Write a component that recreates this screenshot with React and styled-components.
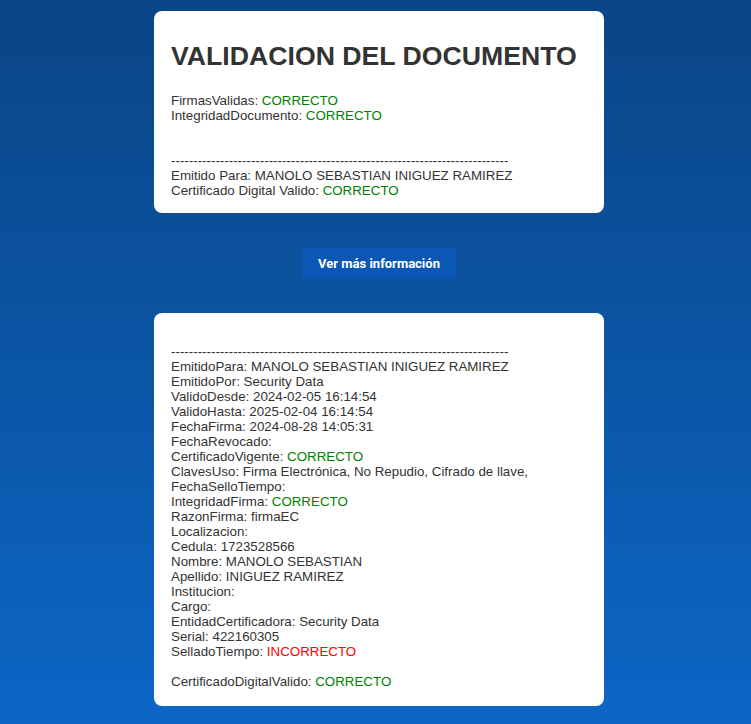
import React from "react";
import styled, { createGlobalStyle } from "styled-components";

const GlobalStyle = createGlobalStyle`
  html, body {
    margin: 0;
    padding: 0;
  }
  body {
    background: linear-gradient(180deg, #0a4585 0%, #0c66c6 100%);
    min-height: 724px;
    font-family: "Liberation Sans", Arial, sans-serif;
  }
`;

const Page = styled.div`
  display: flex;
  flex-direction: column;
  align-items: center;
  padding: 11px 0 0 7px;
`;

const Card = styled.div`
  box-sizing: border-box;
  width: 450px;
  background: #fff;
  border-radius: 8px;
  padding: 16px 17px ${(p) => p.$padBottom || 16}px;
  color: #333;
  font-size: 13.33px;
  line-height: 15px;
`;

const Title = styled.h1`
  margin: 14px 0 22px;
  font-size: 26.67px;
  line-height: 30px;
  font-weight: bold;
  color: #333;
`;

const Line = styled.div`
  min-height: 15px;
  white-space: nowrap;
`;

const Status = styled.span`
  color: ${(p) => (p.$ok ? "#008000" : "#ff0000")};
`;

const Button = styled.button`
  margin: 35px 0 34px;
  height: 31px;
  padding: 0 16px;
  border: none;
  border-radius: 2px;
  background: #0b57b6;
  color: #fff;
  font-family: Roboto, "Liberation Sans", sans-serif;
  font-weight: bold;
  font-size: 13px;
  cursor: pointer;
`;

const DASHES = "-".repeat(76);

const details = [
  ["EmitidoPara", "MANOLO SEBASTIAN INIGUEZ RAMIREZ"],
  ["EmitidoPor", "Security Data"],
  ["ValidoDesde", "2024-02-05 16:14:54"],
  ["ValidoHasta", "2025-02-04 16:14:54"],
  ["FechaFirma", "2024-08-28 14:05:31"],
  ["FechaRevocado", ""],
  ["CertificadoVigente", true],
  ["ClavesUso", "Firma Electrónica, No Repudio, Cifrado de llave,"],
  ["FechaSelloTiempo", ""],
  ["IntegridadFirma", true],
  ["RazonFirma", "firmaEC"],
  ["Localizacion", ""],
  ["Cedula", "1723528566"],
  ["Nombre", "MANOLO SEBASTIAN"],
  ["Apellido", "INIGUEZ RAMIREZ"],
  ["Institucion", ""],
  ["Cargo", ""],
  ["EntidadCertificadora", "Security Data"],
  ["Serial", "422160305"],
  ["SelladoTiempo", false],
];

function Field({ label, value }) {
  if (typeof value === "boolean") {
    return (
      <Line>
        {label}: <Status $ok={value}>{value ? "CORRECTO" : "INCORRECTO"}</Status>
      </Line>
    );
  }
  return (
    <Line>
      {label}:{value ? ` ${value}` : ""}
    </Line>
  );
}

export default function App() {
  return (
    <>
      <GlobalStyle />
      <Page>
        <Card $padBottom={15}>
          <Title>VALIDACION DEL DOCUMENTO</Title>
          <Field label="FirmasValidas" value={true} />
          <Field label="IntegridadDocumento" value={true} />
          <Line />
          <Line />
          <Line>{DASHES}</Line>
          <Field label="Emitido Para" value="MANOLO SEBASTIAN INIGUEZ RAMIREZ" />
          <Field label="Certificado Digital Valido" value={true} />
        </Card>

        <Button>Ver más información</Button>

        <Card $padBottom={17}>
          <Line />
          <Line>{DASHES}</Line>
          {details.map(([label, value]) => (
            <Field key={label} label={label} value={value} />
          ))}
          <Line />
          <Field label="CertificadoDigitalValido" value={true} />
        </Card>
      </Page>
    </>
  );
}
